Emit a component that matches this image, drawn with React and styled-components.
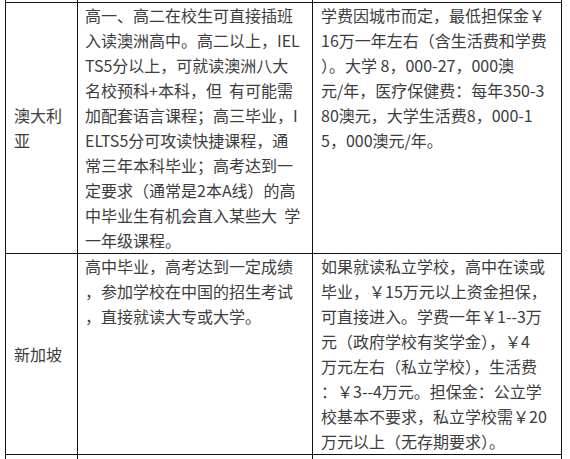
import React from 'react';
import styled, { createGlobalStyle } from 'styled-components';

const GlobalStyle = createGlobalStyle`
  html, body {
    margin: 0;
    padding: 0;
    background: #fff;
  }
  body {
    font-family: "Noto Sans CJK SC", "Noto Sans", sans-serif;
    color: #3d3d3d;
  }
`;

const Page = styled.div`
  height: 459px;
  overflow: hidden;
  padding-left: 5px;
`;

const Table = styled.table`
  border-collapse: collapse;
  table-layout: fixed;
  width: 556px;
`;

const Cell = styled.td`
  border: 1px solid #111;
  padding: 0 6px 0 ${(p) => p.$pad || 7}px;
  font-size: 16px;
  line-height: 25px;
  vertical-align: ${(p) => (p.$middle ? 'middle' : 'top')};
`;

// cut-off rows above and below the visible part of the table
const StubCell = styled.td`
  border-left: 1px solid #111;
  border-right: 1px solid #111;
  border-top: ${(p) => (p.$bottom ? '1px solid #111' : 'none')};
  border-bottom: ${(p) => (p.$bottom ? 'none' : '1px solid #111')};
  height: ${(p) => p.$h}px;
  padding: 0;
`;

const Line = styled.span`
  display: block;
  white-space: pre;
`;

const rows = [
  {
    country: '澳大利亚',
    entry: [
      '高一、高二在校生可直接插班',
      '入读澳洲高中。高二以上，IEL',
      'TS5分以上，可就读澳洲八大',
      '名校预科+本科，但  有可能需',
      '加配套语言课程；高三毕业，I',
      'ELTS5分可攻读快捷课程，通',
      '常三年本科毕业；高考达到一',
      '定要求（通常是2本A线）的高',
      '中毕业生有机会直入某些大  学',
      '一年级课程。',
    ],
    cost: [
      '学费因城市而定，最低担保金￥',
      '16万一年左右（含生活费和学费',
      '）。大学 8，000-27，000澳',
      '元/年，医疗保健费：每年350-3',
      '80澳元，大学生活费8，000-1',
      '5，000澳元/年。',
    ],
  },
  {
    country: '新加坡',
    entry: [
      '高中毕业，高考达到一定成绩',
      '，参加学校在中国的招生考试',
      '，直接就读大专或大学。',
    ],
    cost: [
      '如果就读私立学校，高中在读或',
      '毕业，￥15万元以上资金担保，',
      '可直接进入。学费一年￥1--3万',
      '元（政府学校有奖学金），￥4',
      '万元左右（私立学校），生活费',
      '：￥3--4万元。担保金：公立学',
      '校基本不要求，私立学校需￥20',
      '万元以上（无存期要求）。',
    ],
  },
];

const Lines = ({ items }) => items.map((t, i) => <Line key={i}>{t}</Line>);

export default function App() {
  return (
    <Page>
      <GlobalStyle />
      <Table>
        <colgroup>
          <col style={{ width: 72 }} />
          <col style={{ width: 235 }} />
          <col style={{ width: 249 }} />
        </colgroup>
        <tbody>
          <tr>
            <StubCell $h={2} />
            <StubCell $h={2} />
            <StubCell $h={2} />
          </tr>
          {rows.map((r) => (
            <tr key={r.country}>
              <Cell $middle $pad={8}>{r.country}</Cell>
              <Cell>
                <Lines items={r.entry} />
              </Cell>
              <Cell $pad={8}>
                <Lines items={r.cost} />
              </Cell>
            </tr>
          ))}
          <tr>
            <StubCell $bottom $h={20} />
            <StubCell $bottom $h={20} />
            <StubCell $bottom $h={20} />
          </tr>
        </tbody>
      </Table>
    </Page>
  );
}
